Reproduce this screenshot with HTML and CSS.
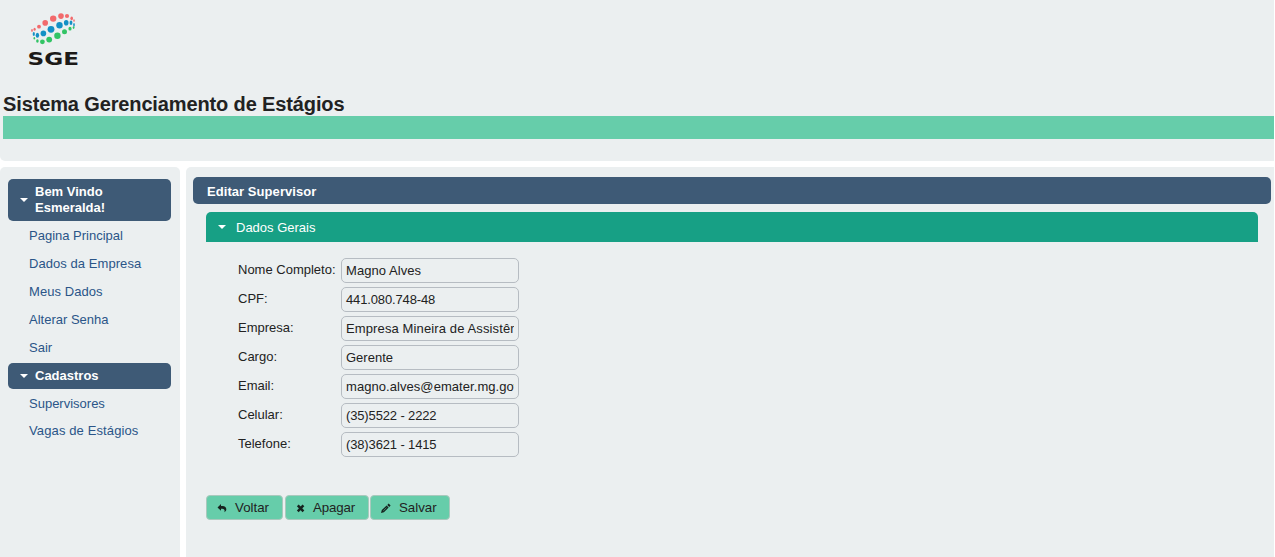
FILE: index.html
```html
<!DOCTYPE html>
<html lang="pt-BR">
<head>
<meta charset="utf-8">
<title>Sistema Gerenciamento de Estágios</title>
<link rel="stylesheet" href="styles.css">
</head>
<body>
<header class="top">
  <svg class="logo" width="64" height="64" viewBox="22 8 64 64" role="img" aria-label="SGE">
    <g fill="#f26a6c">
      <ellipse cx="32" cy="30.5" rx=".8" ry="1.4"/><ellipse cx="34.6" cy="29.3" rx="1.1" ry="1.5"/><circle cx="39" cy="26.7" r="1.9"/><circle cx="45.2" cy="22.9" r="2.8"/><circle cx="53.2" cy="18.6" r="3.2"/><circle cx="61" cy="16.1" r="2.8"/><circle cx="67" cy="16" r="2.1"/><ellipse cx="71.7" cy="18.3" rx="1.3" ry="1.9"/><ellipse cx="74" cy="20.6" rx=".7" ry="1.4"/>
    </g>
    <g fill="#1390c5">
      <ellipse cx="33.8" cy="34" rx="1.1" ry="2"/><ellipse cx="37.4" cy="35.2" rx="1.7" ry="2.5"/><circle cx="43.4" cy="33.4" r="2.8"/><circle cx="51" cy="29.3" r="3.4"/><circle cx="59.5" cy="25.2" r="3.2"/><ellipse cx="66.2" cy="22.8" rx="2.3" ry="2.8"/><ellipse cx="71" cy="22.8" rx="1.4" ry="2.3"/><ellipse cx="74" cy="24.8" rx=".8" ry="1.9"/>
    </g>
    <g fill="#32c465">
      <ellipse cx="34.3" cy="38.3" rx=".8" ry="1.3"/><ellipse cx="37.4" cy="41" rx="1.3" ry="1.7"/><circle cx="42.4" cy="41.8" r="2.4"/><circle cx="49.2" cy="39.6" r="2.9"/><circle cx="57.4" cy="35.7" r="3.2"/><circle cx="64.5" cy="31.7" r="2.5"/><ellipse cx="70" cy="28.7" rx="1.6" ry="1.9"/><ellipse cx="73.6" cy="27.6" rx=".9" ry="1.3"/>
    </g>
    <text class="logo-text" x="27.500" y="65" textLength="51.5" lengthAdjust="spacingAndGlyphs">SGE</text>
  </svg>
  <h1 class="title">Sistema Gerenciamento de Estágios</h1>
  <div class="strip"></div>
</header>
<div class="columns">
  <nav class="side">
    <h3 class="menu-head"><i class="caret"></i><span>Bem Vindo<br>Esmeralda!</span></h3>
    <ul class="menu">
      <li><a>Pagina Principal</a></li>
      <li><a class="wide">Dados da Empresa</a></li>
      <li><a class="wide">Meus Dados</a></li>
      <li><a>Alterar Senha</a></li>
      <li><a>Sair</a></li>
    </ul>
    <h3 class="menu-head"><i class="caret"></i><span>Cadastros</span></h3>
    <ul class="menu menu-tight">
      <li><a>Supervisores</a></li>
      <li><a class="wider">Vagas de Estágios</a></li>
    </ul>
  </nav>
  <main class="content">
    <h2 class="panel-title">Editar Supervisor</h2>
    <section class="panel">
      <h3 class="section-head"><i class="caret"></i><span>Dados Gerais</span></h3>
      <div class="form">
        <label>Nome Completo:</label><div class="field wide">Magno Alves</div>
        <label>CPF:</label><div class="field number">441.080.748-48</div>
        <label>Empresa:</label><div class="field wider"><span>Empresa Mineira de Assistência</span></div>
        <label>Cargo:</label><div class="field">Gerente</div>
        <label>Email:</label><div class="field wide"><span>magno.alves@emater.mg.gov.br</span></div>
        <label>Celular:</label><div class="field number">(35)5522 - 2222</div>
        <label>Telefone:</label><div class="field number">(38)3621 - 1415</div>
      </div>
      <div class="buttons">
        <button class="btn btn-back"><svg width="10" height="10" viewBox="0 0 10 10"><path d="M4 1v2h1.500C8 3 9.300 4.500 9.300 6.300 9.300 7.500 8.700 8.600 7.300 9.200 7.700 8 7.700 7.400 7.300 6.700 6.800 6 6 5.800 4 5.800v2L.5 4.400z"/></svg>Voltar</button>
        <button class="btn btn-delete"><svg width="10" height="10" viewBox="0 0 10 10"><path d="M1.800 2.300l5.600 6M7.400 2.300l-5.600 6" fill="none" stroke="#16231e" stroke-width="2.500"/></svg>Apagar</button>
        <button class="btn btn-save"><svg width="10" height="10" viewBox="0 0 10 10"><path d="M0 10l.8-2.900L5.600 2.600l2 2L2.900 9.200zM6.300 1.900L7.600.6l2 2L8.300 3.900z"/><path d="M2.300 7.800l3.200-3.100" stroke="#66cdaa" stroke-width=".6"/></svg>Salvar</button>
      </div>
    </section>
  </main>
</div>
</body>
</html>
```
FILE: styles.css
```css
* { box-sizing: border-box; }
body {
  margin: 0;
  width: 1274px;
  height: 557px;
  overflow: hidden;
  background: #fff;
  color: #222;
  font: 13px/16px "Liberation Sans", Arial, sans-serif;
}
h1, h2, h3, ul { margin: 0; padding: 0; }
.top {
  height: 161px;
  padding: 8px 0 0 3px;
  background: #ebeff0;
  border-radius: 0 0 0 5px;
}
.logo { display: block; margin-left: 19px; }
.logo-text { font: bold 18.500px "DejaVu Sans", sans-serif; fill: #1c1a18; }
.title {
  margin-top: 20px;
  height: 24px;
  font-size: 20px;
  letter-spacing: -.13px;
  line-height: 24px;
  white-space: nowrap;
}
.strip { height: 23px; background: #66cdaa; }
.columns { display: flex; gap: 6px; height: 390px; margin-top: 6px; }
.side {
  width: 180px;
  padding: 12px 9px 0 8px;
  background: #ebeff0;
  border-radius: 5px 5px 0 0;
}
.menu-head {
  display: flex;
  align-items: center;
  gap: 7px;
  padding: 5px 12px;
  background: #3e5a76;
  border-radius: 5px;
  color: #fff;
  font-size: 13px;
}
.caret {
  width: 8px;
  height: 4px;
  background: #fff;
  clip-path: polygon(0 0, 100% 0, 50% 100%);
}
.menu { list-style: none; padding: 1px 0 1px 21px; color: #2a5588; }
.menu li { height: 28px; line-height: 28px; }
.menu-tight li { height: 27px; }
.wide { letter-spacing: .06px; }
.wider { letter-spacing: .12px; }
.number { letter-spacing: -.14px; }
.content {
  flex: 1;
  padding: 10px 3px 0 7px;
  background: #ebeff0;
  border-radius: 5px 0 0 0;
}
.panel-title {
  height: 27px;
  padding-left: 14px;
  background: #3e5a76;
  border-radius: 5px;
  color: #fff;
  font-size: 13px;
  letter-spacing: .06px;
  line-height: 29px;
}
.panel { padding: 8px 13px 0; }
.section-head {
  display: flex;
  align-items: center;
  gap: 10px;
  height: 30px;
  padding-left: 12px;
  background: #17a085;
  border-radius: 5px 5px 0 0;
  color: #fff;
  font-size: 13px;
  font-weight: normal;
}
.section-head span { padding-top: 2px; }
.form {
  display: grid;
  grid-template-columns: 99px 178px;
  gap: 4px;
  padding: 16px 32px 0;
}
.form label { line-height: 23px; white-space: nowrap; }
.field {
  height: 25px;
  padding: 0 4px;
  border: 1px solid #b6bcc2;
  border-radius: 5px;
  line-height: 24px;
  white-space: nowrap;
}
.field span { display: block; overflow: hidden; }
.buttons { display: flex; gap: 2px; margin-top: 38px; }
.btn {
  display: flex;
  align-items: center;
  height: 25px;
  padding: 0 0 0 10px;
  gap: 8px;
  background: #66cdaa;
  border: 1px solid #a9c9bd;
  border-radius: 4px;
  color: #222;
  font: 13.300px "Liberation Sans", Arial, sans-serif;
}
.btn svg { fill: #16231e; }
.btn-back { width: 77px; }
.btn-delete { width: 84px; gap: 7px; letter-spacing: -.12px; }
.btn-save { width: 80px; margin-left: -1px; }
```
